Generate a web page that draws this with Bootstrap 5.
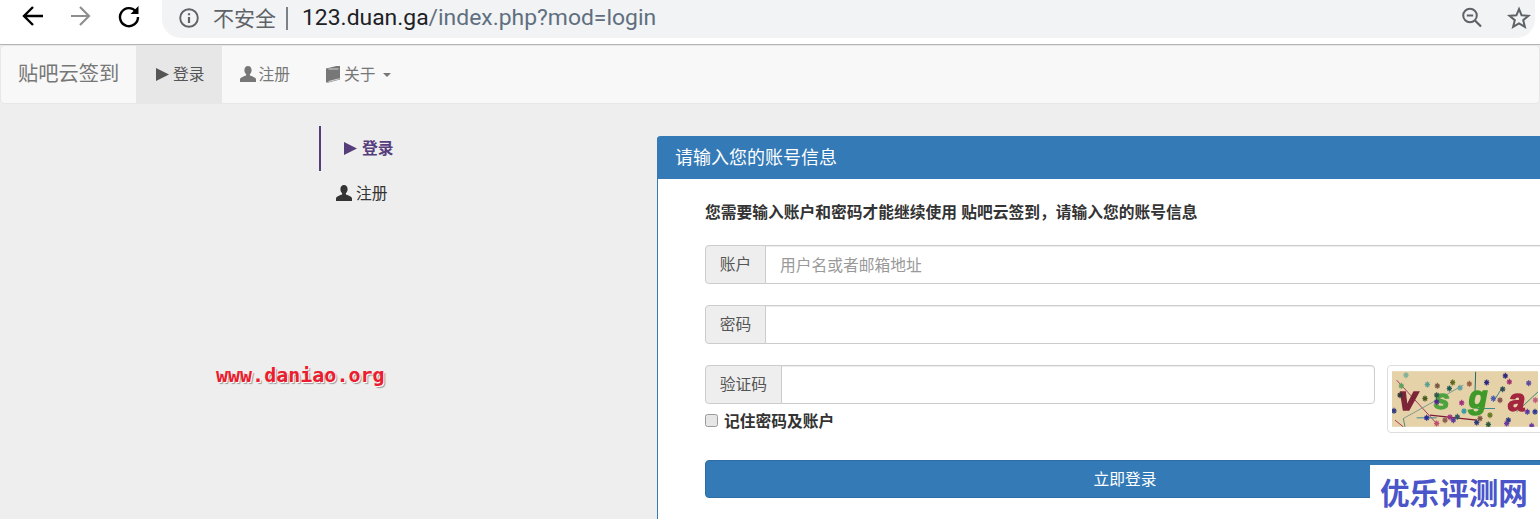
<!DOCTYPE html>
<html lang="zh-CN">
<head>
<meta charset="utf-8">
<title>贴吧云签到</title>
<link href="https://cdn.jsdelivr.net/npm/bootstrap@5.3.0/dist/css/bootstrap.min.css" rel="stylesheet">
<style>
html,body{height:519px;overflow:hidden}
body{background:#eee;font-family:"Liberation Sans","Noto Sans CJK SC",sans-serif;font-size:15.75px;color:#333;position:relative}
.chrome-bar{height:45px;background:#fff;border-bottom:1px solid #b4b4b4;padding-left:18px}
.chrome-btn{width:30px;height:30px;margin:1px 18px 0 0;flex:none}
.omni{height:38px;width:1373px;background:#f1f3f4;border-radius:0 0 19px 19px;padding:0 3px 2px 16px;align-self:flex-start;font-family:Roboto,"Noto Sans CJK SC",sans-serif}
.omni-warn{font-size:21px;color:#5f6368;margin-left:13px;font-family:"Noto Sans CJK SC",sans-serif}
.omni-sep{width:2px;height:23px;background:#7d8084;margin:0 14px 0 10px}
.omni-url{font-size:22.9px;color:#202124;white-space:nowrap}
.omni-url span{color:#5f6f80}
.star-ico{margin-left:21px}
.site-nav{height:59px;background:#f8f8f8;border:1px solid #e7e7e7;border-radius:4px;padding:0}
.site-nav .navbar-brand{font-size:20.25px;color:#777;padding:0 17px;margin:0;line-height:57px;width:135px}
.nav-item-x{display:flex;align-items:center;height:57px;padding:0 17px 0 18px;color:#777;text-decoration:none;white-space:nowrap}
.nav-item-x.on{background:#e7e7e7;color:#555;padding:0 17px 0 20px}
.nav-item-x svg{margin-right:3px}
.caret-x{display:inline-block;border-top:4px solid #777;border-left:4px solid transparent;border-right:4px solid transparent;margin-left:7px}
.side-col{width:657px;flex:none;padding:22px 0 0 319px}
.side-on{display:flex;align-items:center;height:45px;border-left:2px solid #563d7c;padding-left:23px;color:#563d7c;font-weight:700;text-decoration:none}
.side-off{display:flex;align-items:center;height:45px;padding-left:17px;color:#333;text-decoration:none}
.side-on svg,.side-off svg{margin-right:4px}
.login-panel{width:960px;flex:none;margin-top:32px;border:0;border-left:1px solid #337ab7;border-radius:4px 0 0 0;height:383px;background:#fff}
.login-panel .card-header{height:43px;background:#337ab7;color:#fff;font-size:18px;border:0;border-radius:4px 0 0 0;padding:2px 18px 0;margin-left:-1px;display:flex;align-items:center}
.login-panel .card-body{padding:23px 0 0 47px}
.login-hint{font-weight:700;line-height:22px;margin-bottom:21px;color:#333}
.fld{height:39px;margin-bottom:21px;flex-wrap:nowrap}
.fld .input-group-text{background:#eee;color:#555;border-color:#ccc;padding:0 13.75px;font-size:15.75px;border-radius:4px 0 0 4px;height:39px}
.fld .form-control{border-color:#ccc;border-radius:0 4px 4px 0;height:39px;font-size:15.75px;padding:3px 14px 0;box-shadow:inset 0 1px 1px rgba(0,0,0,.075)}
.fld .form-control::placeholder{color:#999}
.code-wrap{width:670px;flex:none}
.code-wrap .fld{margin-bottom:7px}
.remember{display:flex;align-items:center;font-weight:700;margin:0;line-height:22px}
.remember input{width:13px;height:13px;margin:0 6px 4px 0;background:#e6e6e6;border:1px solid #9a9a9a;border-radius:2.5px;appearance:none}
.captcha-box{margin-left:12px;border:1px solid #ddd;border-radius:4px;padding:5px 4px;height:68px;width:170px;background:#fff;flex:none}
.captcha-box svg{filter:blur(.35px)}
.login-btn{display:block;width:840px;height:38px;margin-top:27px;background:#337ab7;border-color:#2e6da4;font-size:15.75px;padding:2px 0 0;color:#fff;border-radius:4px}
.wm-site{position:absolute;left:216px;top:362px;font:700 20px/26px "DejaVu Sans Mono",monospace;color:#ed1c2e;text-shadow:1px 1px 0 #fff,2px 2px 1px #999}
.wm-logo{position:absolute;left:1370px;top:465px;width:170px;height:54px;background:#fff;color:#4a55c9;font:700 29.6px/54px "Noto Sans CJK SC",sans-serif;padding-left:10px;white-space:nowrap}
</style>
</head>
<body>
<div class="chrome-bar d-flex align-items-start">
  <svg class="chrome-btn" viewBox="0 0 30 30"><path d="M25 15H7M15 6l-9 9 9 9" fill="none" stroke="#000" stroke-width="2.4"/></svg>
  <svg class="chrome-btn" viewBox="0 0 30 30"><path d="M5 15h18M14 6l9 9-9 9" fill="none" stroke="#8e8e8e" stroke-width="2.2"/></svg>
  <svg class="chrome-btn" viewBox="0 0 30 30"><path d="M22 10.500A9 9 0 1 0 24 16" fill="none" stroke="#000" stroke-width="2.4"/><path d="M24.500 5v8h-8z" fill="#000"/></svg>
  <div class="omni d-flex align-items-center">
    <svg width="22" height="22" viewBox="0 0 22 22" class="flex-shrink-0"><circle cx="11" cy="11" r="8.800" fill="none" stroke="#5f6368" stroke-width="1.900"/><path d="M11 10v6M11 6.200v2" stroke="#5f6368" stroke-width="2.200"/></svg>
    <span class="omni-warn">不安全</span><i class="omni-sep"></i>
    <span class="omni-url">123.duan.ga<span>/index.php?mod=login</span></span>
    <svg class="ms-auto" width="26" height="26" viewBox="0 0 26 26"><circle cx="11" cy="10.500" r="6.800" fill="none" stroke="#5f6368" stroke-width="2"/><path d="M7.800 10.500h6.400M16 15.500l6 6" stroke="#5f6368" stroke-width="2.200"/></svg>
    <svg class="star-ico" width="26" height="26" viewBox="0 0 26 26"><path d="M13 4l2.600 6.300 6.900.5-5.300 4.400 1.700 6.700L13 18.300l-5.900 3.600 1.700-6.700-5.300-4.400 6.900-.5z" fill="none" stroke="#5f6368" stroke-width="2"/></svg>
  </div>
</div>

<nav class="site-nav d-flex align-items-center">
  <a class="navbar-brand" href="#">贴吧云签到</a>
  <a class="nav-item-x on" href="#"><svg width="14" height="15" viewBox="0 0 14 15"><path d="M0 1l13 6.500L0 14z" fill="#555"/></svg>登录</a>
  <a class="nav-item-x" href="#"><svg width="16" height="17" viewBox="0 0 16 17"><path d="M8 0c2.300 0 3.600 1.700 3.600 4.200 0 1.700-.8 3.100-1.700 3.900v1.300c1.700.8 6.100 1.500 6.100 4.300V16H0v-2.300c0-2.800 4.400-3.500 6.100-4.300V8.100C5.200 7.300 4.400 5.900 4.400 4.200 4.400 1.700 5.700 0 8 0z" fill="#777"/></svg>注册</a>
  <a class="nav-item-x" href="#"><svg width="16" height="17" viewBox="0 0 16 17"><path d="M1 2.500 11.500 0H15v13.500L3.500 16.500H1z" fill="#777"/><path d="M3.500 3h10M3.500 15.500l11-2.800" stroke="#eee" stroke-width=".8" fill="none"/></svg>关于<i class="caret-x"></i></a>
</nav>

<main class="d-flex">
  <div class="side-col">
    <a class="side-on" href="#"><svg width="14" height="15" viewBox="0 0 14 15"><path d="M0 1l13 6.500L0 14z" fill="#563d7c"/></svg>登录</a>
    <a class="side-off" href="#"><svg width="16" height="17" viewBox="0 0 16 17"><path d="M8 0c2.300 0 3.600 1.700 3.600 4.200 0 1.700-.8 3.100-1.700 3.900v1.300c1.700.8 6.100 1.500 6.100 4.300V16H0v-2.300c0-2.800 4.400-3.500 6.100-4.300V8.100C5.200 7.300 4.400 5.900 4.400 4.200 4.400 1.700 5.700 0 8 0z" fill="#333"/></svg>注册</a>
  </div>
  <section class="card login-panel">
    <div class="card-header">请输入您的账号信息</div>
    <div class="card-body">
      <p class="login-hint">您需要输入账户和密码才能继续使用 贴吧云签到，请输入您的账号信息</p>
      <div class="input-group fld"><span class="input-group-text">账户</span><input class="form-control" type="text" placeholder="用户名或者邮箱地址"></div>
      <div class="input-group fld"><span class="input-group-text">密码</span><input class="form-control" type="password"></div>
      <div class="d-flex">
        <div class="code-wrap">
          <div class="input-group fld"><span class="input-group-text">验证码</span><input class="form-control" type="text"></div>
          <label class="remember"><input type="checkbox">记住密码及账户</label>
        </div>
        <div class="captcha-box">
          <svg width="146" height="56" viewBox="156 48 438 167">
            <defs><path id="spk" d="M-8 0H8M0-9V9M-6-6 6 6M-6 6 6-6" fill="none" stroke-width="3.500"/></defs>
            <rect x="156" y="48" width="438" height="167" fill="#e6d2a8"/>
            <g fill="none" stroke-width="3">
              <path d="M170 75 290 205" stroke="#a33b5e"/><path d="M407 50 405 115" stroke="#1f6a6a"/>
              <path d="M190 190 370 90" stroke="#7f9c90"/><path d="M270 180 410 195" stroke="#7c1a36" stroke-width="4"/>
              <path d="M165 195 190 215" stroke="#a33b5e"/><path d="M190 190 195 215" stroke="#4d8a80"/>
              <path d="M460 140 485 100" stroke="#3f8a80"/><path d="M530 170 594 110" stroke="#3f8a80"/>
              <path d="M230 188H290" stroke="#3f8a90"/><path d="M410 160H465" stroke="#3f8a90"/>
            </g>
            <g font-family="Liberation Sans,sans-serif" font-weight="700" font-style="italic" text-anchor="middle" stroke-width="4">
              <text x="204" y="165" font-size="100" fill="#7c2438" stroke="#7c2438">v</text>
              <text x="305" y="162" font-size="84" fill="#4ea33f" stroke="#4ea33f">s</text>
              <text x="414" y="160" font-size="94" fill="#3f9a2a" stroke="#3f9a2a">g</text>
              <text x="530" y="168" font-size="92" fill="#a3263f" stroke="#a3263f">a</text>
            </g>
            <use href="#spk" x="198" y="60" stroke="#7fb09a"/><use href="#spk" x="184" y="92" stroke="#5fa05f"/><use href="#spk" x="180" y="120" stroke="#333"/>
            <use href="#spk" x="262" y="88" stroke="#5f9f8f"/><use href="#spk" x="292" y="92" stroke="#7a5a40"/><use href="#spk" x="338" y="82" stroke="#5f6a1f"/>
            <use href="#spk" x="328" y="100" stroke="#1f5a55"/><use href="#spk" x="360" y="98" stroke="#5fa0a0"/><use href="#spk" x="388" y="86" stroke="#9a5f40"/>
            <use href="#spk" x="440" y="82" stroke="#2f2a7f"/><use href="#spk" x="496" y="62" stroke="#2f2a7f"/><use href="#spk" x="508" y="80" stroke="#a0306f"/>
            <use href="#spk" x="566" y="84" stroke="#5a4aa0"/><use href="#spk" x="488" y="102" stroke="#2f4a55"/><use href="#spk" x="460" y="130" stroke="#4a5ab0"/>
            <use href="#spk" x="480" y="135" stroke="#8a5050"/><use href="#spk" x="586" y="135" stroke="#c05f80"/><use href="#spk" x="162" y="167" stroke="#2f3a7f"/>
            <use href="#spk" x="255" y="130" stroke="#4a5a1f"/><use href="#spk" x="290" y="120" stroke="#2f5a50"/><use href="#spk" x="290" y="140" stroke="#4a2a8a"/>
            <use href="#spk" x="365" y="143" stroke="#a0307f"/><use href="#spk" x="372" y="168" stroke="#2f9aa0"/><use href="#spk" x="260" y="188" stroke="#2f2a9a"/>
            <use href="#spk" x="330" y="186" stroke="#a0307f"/><use href="#spk" x="352" y="185" stroke="#2f5a60"/><use href="#spk" x="340" y="195" stroke="#5a3a9a"/>
            <use href="#spk" x="315" y="195" stroke="#8a5a50"/><use href="#spk" x="420" y="190" stroke="#7a5a40"/><use href="#spk" x="410" y="202" stroke="#2f3a7f"/>
            <use href="#spk" x="450" y="180" stroke="#5f7a1f"/><use href="#spk" x="445" y="208" stroke="#2f5a40"/><use href="#spk" x="505" y="195" stroke="#2f3a7f"/>
            <use href="#spk" x="500" y="205" stroke="#6a3aa0"/><use href="#spk" x="562" y="170" stroke="#5a3aa0"/><use href="#spk" x="585" y="170" stroke="#2f3a8f"/>
            <use href="#spk" x="290" y="205" stroke="#c04f70"/><use href="#spk" x="575" y="212" stroke="#6a3aa0"/>
          </svg>
        </div>
      </div>
      <button class="btn btn-primary login-btn" type="button">立即登录</button>
    </div>
  </section>
</main>

<div class="wm-site">www.daniao.org</div>
<div class="wm-logo">优乐评测网</div>
</body>
</html>
